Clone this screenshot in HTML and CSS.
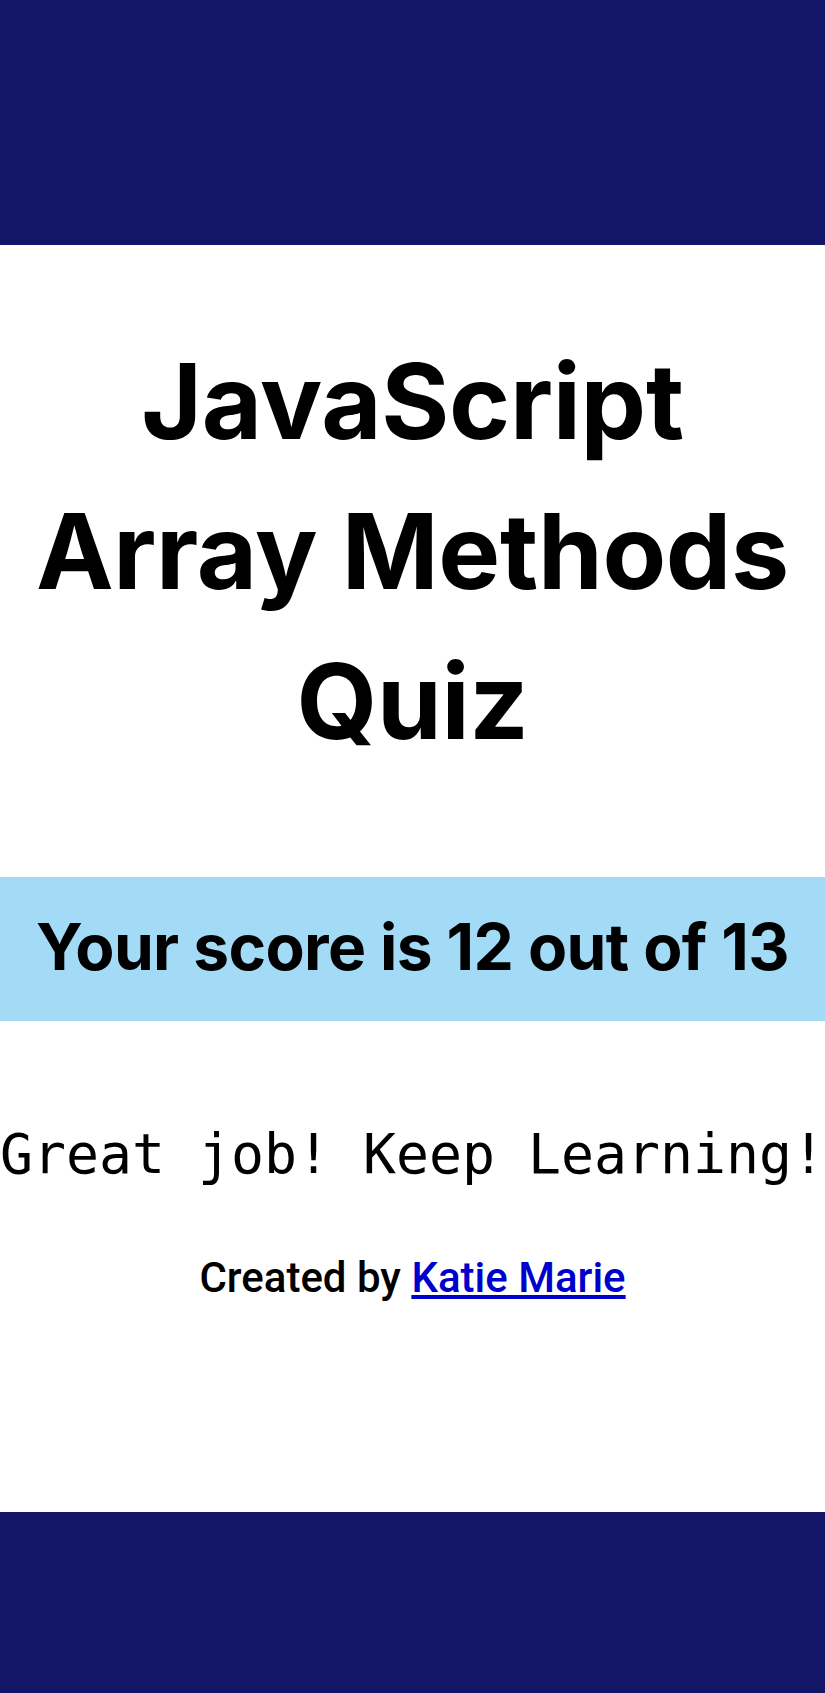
FILE: index.html
```html
<!DOCTYPE html>
<html lang="en">
<head>
<meta charset="utf-8">
<title>JavaScript Array Methods Quiz</title>
<link rel="stylesheet" href="styles.css">
</head>
<body>
<header class="top-bar"></header>
<main class="content">
  <h1 class="title">JavaScript<br>Array Methods<br>Quiz</h1>
  <section class="score-band">
    <h2 class="score">Your score is 12 out of 13</h2>
  </section>
  <p class="message">Great job! Keep Learning!</p>
  <p class="credit">Created by <a href="#" class="credit-link">Katie Marie</a></p>
</main>
<footer class="bottom-bar"></footer>
</body>
</html>
```

FILE: styles.css
```css
* { box-sizing: border-box; }

html, body {
  margin: 0;
  padding: 0;
}

body {
  min-height: 100vh;
  display: flex;
  flex-direction: column;
  background: #ffffff;
  color: #000000;
  font-family: Inter, "Noto Sans", sans-serif;
}

.top-bar {
  height: 245px;
  background: #131566;
  flex: none;
}

.content {
  flex: 1;
  display: flex;
  flex-direction: column;
  align-items: stretch;
}

.title {
  margin: 81px 0 0;
  font-family: Inter, sans-serif;
  font-weight: 700;
  font-size: 104px;
  line-height: 150px;
  text-align: center;
  letter-spacing: -0.3px;
}

.score-band {
  margin-top: 101px;
  background: #a3daf6;
  padding: 30px 0 34px;
}

.score {
  margin: 0;
  font-family: Inter, sans-serif;
  font-weight: 700;
  font-size: 64px;
  line-height: 80px;
  text-align: center;
  letter-spacing: -0.6px;
}

.message {
  margin: 100px 0 0;
  font-family: "DejaVu Sans Mono", "Liberation Mono", monospace;
  font-size: 54.8px;
  line-height: 66px;
  text-align: center;
  white-space: nowrap;
}

.credit {
  margin: 66px 0 0;
  font-family: Roboto, "Liberation Sans", sans-serif;
  font-weight: 500;
  font-size: 42px;
  line-height: 50px;
  text-align: center;
}

.credit-link {
  color: #0000cc;
  text-decoration: underline;
}

.bottom-bar {
  height: 181px;
  background: #131566;
  flex: none;
}
```
